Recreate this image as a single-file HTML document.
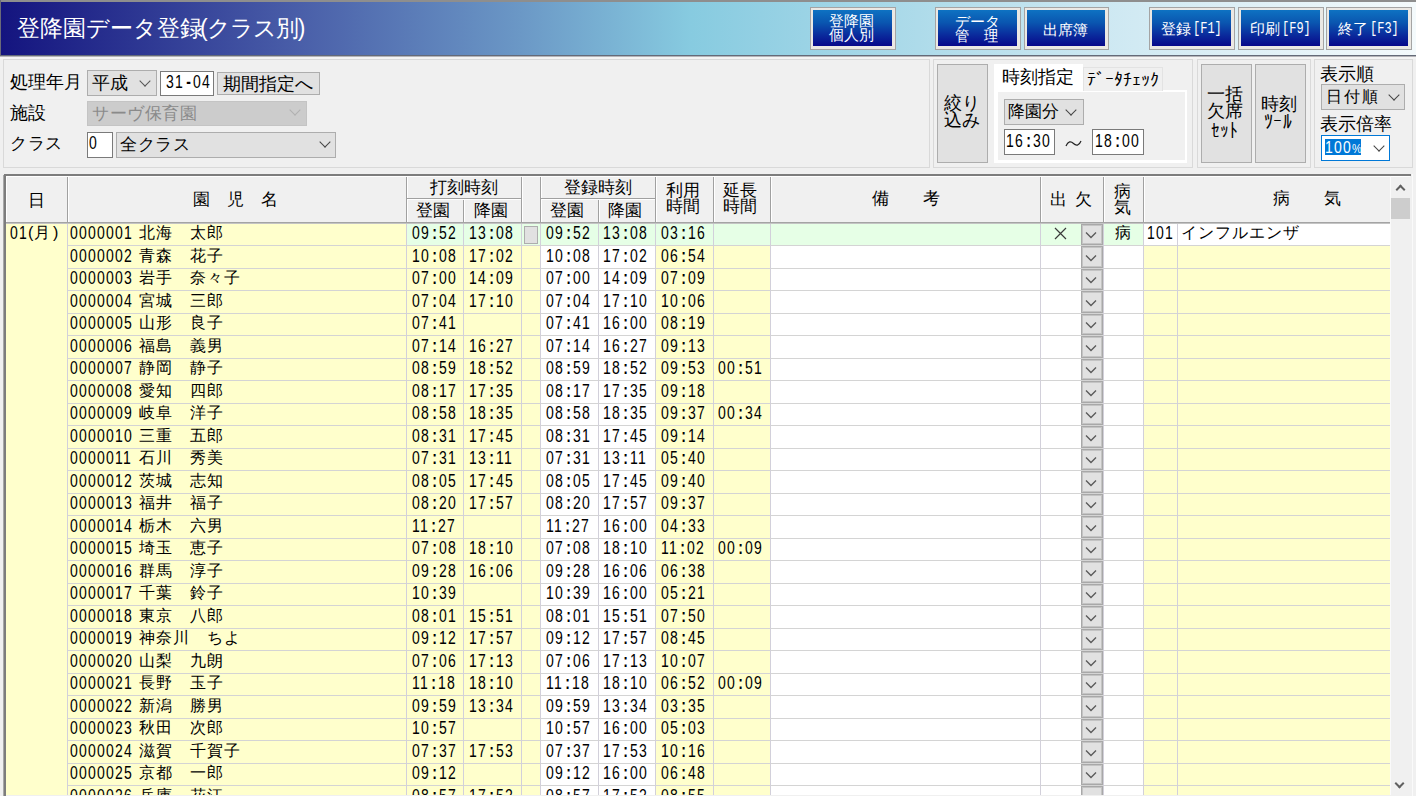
<!DOCTYPE html><html><head><meta charset="utf-8"><title>登降園データ登録</title><style>
*{box-sizing:border-box}
body{margin:0;width:1416px;height:796px;overflow:hidden;background:#f0f0f0;position:relative;font-family:"Liberation Sans",sans-serif;color:#000}
.a{position:absolute}
.t{position:absolute;white-space:pre;line-height:1}
.m{font-family:"Liberation Mono",monospace}
.n{font-family:"Liberation Sans",sans-serif;letter-spacing:1.22px}
.c{display:inline-block;width:9px;text-align:center;letter-spacing:0;font-weight:bold}
.btn{position:absolute;background:#ebe8e4;border:1px solid #a4a4a4}
.btn i{position:absolute;left:2px;top:2px;right:3px;bottom:3px;background:linear-gradient(#0e72c2,#0a56b0 35%,#0a2a9c 70%,#08088a);display:block}
.btn b{position:absolute;color:#fff;font-weight:normal;white-space:pre;line-height:1}
.grp{position:absolute;border:1px solid #d9d9d9}
.cb{position:absolute;background:#e1e1e1;border:1px solid #adadad}
.inp{position:absolute;background:#fff;border:1px solid #7a7a7a}
.chev{position:absolute;width:8px;height:8px;border-right:1.3px solid #444;border-bottom:1.3px solid #444;transform:rotate(45deg)}
.vb{position:absolute;background:#e1e1e1;border:1px solid #adadad}
</style></head><body>
<div class="a" style="left:0;top:0;width:1416px;height:2px;background:#8e8e8e"></div>
<div class="a" style="left:0;top:0;width:1px;height:56px;background:#6a6a78"></div>
<div class="a" style="left:1px;top:2px;width:1415px;height:53px;background:linear-gradient(90deg,#14147f 0px,#4a5fa9 300px,#6b98c6 520px,#87cbe0 690px,#cde8f2 1100px,#f4fafc 1416px)"></div>
<div class="t" style="left:17px;top:17px;font-size:23px;color:#fff">登降園データ登録</div>
<div class="t" style="left:200px;top:17px;font-size:23px;color:#fff;letter-spacing:-1px">(クラス別)</div>
<div class="btn" style="left:810px;top:7px;width:86px;height:43px"><i></i><b style="left:18px;top:5px;font-size:15px;">登降園</b><b style="left:18px;top:19px;font-size:15px;">個人別</b></div>
<div class="btn" style="left:935px;top:7px;width:86px;height:43px"><i></i><b style="left:19px;top:6px;font-size:15px;">データ</b><b style="left:19px;top:20px;font-size:15px;transform:scaleX(0.95);transform-origin:0 0">管　理</b></div>
<div class="btn" style="left:1024px;top:7px;width:85px;height:43px"><i></i><b style="left:18px;top:14px;font-size:15px;">出席簿</b></div>
<div class="btn" style="left:1149px;top:7px;width:86px;height:43px"><i></i><b style="left:11px;top:13px;font-size:15px;">登録</b><b style="left:43px;top:13px;font-size:12px;font-family:Liberation Mono;transform:scaleY(1.3);transform-origin:0 0">[F1]</b></div>
<div class="btn" style="left:1238px;top:7px;width:86px;height:43px"><i></i><b style="left:11px;top:13px;font-size:15px;">印刷</b><b style="left:43px;top:13px;font-size:12px;font-family:Liberation Mono;transform:scaleY(1.3);transform-origin:0 0">[F9]</b></div>
<div class="btn" style="left:1326px;top:7px;width:86px;height:43px"><i></i><b style="left:11px;top:13px;font-size:15px;">終了</b><b style="left:43px;top:13px;font-size:12px;font-family:Liberation Mono;transform:scaleY(1.3);transform-origin:0 0">[F3]</b></div>
<div class="a" style="left:0;top:55px;width:1416px;height:1px;background:#646a78"></div>
<div class="a" style="left:0;top:56px;width:1416px;height:1px;background:#b4b4b8"></div>
<div class="a" style="left:0;top:57px;width:1416px;height:2px;background:#f4f4f4"></div>
<div class="grp" style="left:3px;top:59px;width:927px;height:109px"></div>
<div class="grp" style="left:933px;top:59px;width:260px;height:109px"></div>
<div class="grp" style="left:1197px;top:59px;width:114px;height:109px"></div>
<div class="grp" style="left:1314px;top:59px;width:99px;height:109px"></div>
<div class="t" style="left:10px;top:73px;font-size:18px">処理年月</div>
<div class="cb" style="left:87px;top:70px;width:70px;height:26px"></div>
<div class="t" style="left:92px;top:74px;font-size:18px">平成</div>
<div class="chev" style="left:141px;top:77px;border-color:#555"></div>
<div class="inp" style="left:160px;top:71px;width:54px;height:25px"></div>
<div class="t n" style="left:166px;top:73px;font-size:14px;transform:scaleY(1.25);transform-origin:0 0">31<span class="c">-</span>04</div>
<div class="cb" style="left:217px;top:72px;width:103px;height:23px"></div>
<div class="t" style="left:223px;top:75px;font-size:18px">期間指定へ</div>
<div class="t" style="left:10px;top:104px;font-size:18px">施設</div>
<div class="a" style="left:87px;top:101px;width:220px;height:25px;background:#cccccc;border:1px solid #c4c4c4"></div>
<div class="t" style="left:92px;top:105px;font-size:17px;color:#8a8a8a;letter-spacing:0.5px">サーヴ保育園</div>
<div class="chev" style="left:291px;top:106px;border-color:#b0b0b0"></div>
<div class="t" style="left:10px;top:135px;font-size:17px;letter-spacing:0.5px">クラス</div>
<div class="inp" style="left:87px;top:132px;width:26px;height:26px"></div>
<div class="t n" style="left:89px;top:133px;font-size:14px;transform:scaleY(1.3);transform-origin:0 0">0</div>
<div class="cb" style="left:116px;top:132px;width:220px;height:26px"></div>
<div class="t" style="left:120px;top:136px;font-size:17px;letter-spacing:0.5px">全クラス</div>
<div class="chev" style="left:321px;top:138px"></div>
<div class="vb" style="left:937px;top:64px;width:51px;height:99px"></div>
<div class="t" style="left:944px;top:95px;font-size:18px;line-height:17px">絞り<br>込み</div>
<div class="a" style="left:994px;top:90px;width:193px;height:73px;background:#fff"></div>
<div class="a" style="left:998px;top:92px;width:187px;height:68px;background:#f0f0f0"></div>
<div class="a" style="left:994px;top:64px;width:89px;height:28px;background:#fff"></div>
<div class="a" style="left:1083px;top:67px;width:80px;height:24px;background:#f0f0f0;border:1px solid #e3e3e3;border-bottom:none"></div>
<div class="t" style="left:1002px;top:69px;font-size:17.5px">時刻指定</div>
<div class="t" style="left:1087px;top:71px;font-size:18px">ﾃﾞｰﾀﾁｪｯｸ</div>
<div class="cb" style="left:1004px;top:99px;width:80px;height:26px"></div>
<div class="t" style="left:1008px;top:103px;font-size:17px">降園分</div>
<div class="chev" style="left:1067px;top:106px"></div>
<div class="inp" style="left:1004px;top:129px;width:51px;height:26px"></div>
<div class="t n" style="left:1006px;top:131px;font-size:14px;transform:scaleY(1.3);transform-origin:0 0">16<span class="c">:</span>30</div>
<svg class="a" style="left:1065px;top:138px" width="17" height="10"><path d="M1 8C3 3 6 3 8.5 5.5S14 8 16 3" stroke="#222" stroke-width="1.2" fill="none"/></svg>
<div class="inp" style="left:1092px;top:129px;width:52px;height:26px"></div>
<div class="t n" style="left:1095px;top:131px;font-size:14px;transform:scaleY(1.3);transform-origin:0 0">18<span class="c">:</span>00</div>
<div class="vb" style="left:1201px;top:64px;width:51px;height:99px"></div>
<div class="t" style="left:1207px;top:86px;font-size:18px;line-height:17px">一括<br>欠席</div>
<div class="t" style="left:1211px;top:121px;font-size:19px;transform:scaleX(0.9);transform-origin:0 0">ｾｯﾄ</div>
<div class="vb" style="left:1255px;top:64px;width:51px;height:99px"></div>
<div class="t" style="left:1261px;top:95px;font-size:18px">時刻</div>
<div class="t" style="left:1264px;top:111px;font-size:21px;transform:scaleX(0.85);transform-origin:0 0">ﾂｰﾙ</div>
<div class="t" style="left:1320px;top:65px;font-size:18px">表示順</div>
<div class="cb" style="left:1321px;top:84px;width:84px;height:26px"></div>
<div class="t" style="left:1326px;top:89px;font-size:16px;letter-spacing:2px">日付順</div>
<div class="chev" style="left:1390px;top:91px"></div>
<div class="t" style="left:1320px;top:115px;font-size:18px">表示倍率</div>
<div class="a" style="left:1321px;top:135px;width:69px;height:26px;background:#fff;border:1px solid #0078d7"></div>
<div class="a" style="left:1325px;top:139px;width:36px;height:16px;background:#0078d7"></div>
<div class="t n" style="left:1325px;top:139px;font-size:14px;color:#fff;transform:scaleY(1.2);transform-origin:0 0">100<span class="c" style="font-size:11px;font-weight:normal">%</span></div>
<div class="chev" style="left:1375px;top:142px"></div>
<div class="a" style="left:4px;top:174px;width:1409px;height:622px;background:#f0f0f0;border-left:2px solid #7d7d7d;border-top:2px solid #7d7d7d"></div>
<div class="a" style="left:3px;top:175px;width:1px;height:621px;background:#a8a8a8"></div>
<div class="a" style="left:6px;top:176px;width:1404px;height:1px;background:#fff"></div>
<div class="a" style="left:6px;top:176px;width:1px;height:620px;background:#fff"></div>
<div class="a" style="left:67px;top:177px;width:1px;height:45px;background:#a0a0a0"></div>
<div class="a" style="left:68px;top:177px;width:1px;height:45px;background:#fff"></div>
<div class="a" style="left:406px;top:177px;width:1px;height:45px;background:#a0a0a0"></div>
<div class="a" style="left:407px;top:177px;width:1px;height:45px;background:#fff"></div>
<div class="a" style="left:463px;top:199px;width:1px;height:23px;background:#a0a0a0"></div>
<div class="a" style="left:464px;top:199px;width:1px;height:23px;background:#fff"></div>
<div class="a" style="left:521px;top:177px;width:1px;height:45px;background:#a0a0a0"></div>
<div class="a" style="left:522px;top:177px;width:1px;height:45px;background:#fff"></div>
<div class="a" style="left:540px;top:177px;width:1px;height:45px;background:#a0a0a0"></div>
<div class="a" style="left:541px;top:177px;width:1px;height:45px;background:#fff"></div>
<div class="a" style="left:598px;top:199px;width:1px;height:23px;background:#a0a0a0"></div>
<div class="a" style="left:599px;top:199px;width:1px;height:23px;background:#fff"></div>
<div class="a" style="left:655px;top:177px;width:1px;height:45px;background:#a0a0a0"></div>
<div class="a" style="left:656px;top:177px;width:1px;height:45px;background:#fff"></div>
<div class="a" style="left:713px;top:177px;width:1px;height:45px;background:#a0a0a0"></div>
<div class="a" style="left:714px;top:177px;width:1px;height:45px;background:#fff"></div>
<div class="a" style="left:770px;top:177px;width:1px;height:45px;background:#a0a0a0"></div>
<div class="a" style="left:771px;top:177px;width:1px;height:45px;background:#fff"></div>
<div class="a" style="left:1040px;top:177px;width:1px;height:45px;background:#a0a0a0"></div>
<div class="a" style="left:1041px;top:177px;width:1px;height:45px;background:#fff"></div>
<div class="a" style="left:1103px;top:177px;width:1px;height:45px;background:#a0a0a0"></div>
<div class="a" style="left:1104px;top:177px;width:1px;height:45px;background:#fff"></div>
<div class="a" style="left:1143px;top:177px;width:1px;height:45px;background:#a0a0a0"></div>
<div class="a" style="left:1144px;top:177px;width:1px;height:45px;background:#fff"></div>
<div class="a" style="left:1390px;top:177px;width:1px;height:45px;background:#a0a0a0"></div>
<div class="a" style="left:1391px;top:177px;width:1px;height:45px;background:#fff"></div>
<div class="a" style="left:406px;top:198px;width:115px;height:1px;background:#a0a0a0"></div>
<div class="a" style="left:540px;top:198px;width:115px;height:1px;background:#a0a0a0"></div>
<div class="a" style="left:407px;top:199px;width:114px;height:1px;background:#fff"></div>
<div class="a" style="left:541px;top:199px;width:114px;height:1px;background:#fff"></div>
<div class="t" style="left:28px;top:192px;font-size:17px;">日</div>
<div class="t" style="left:193px;top:191px;font-size:17px;">園　児　名</div>
<div class="t" style="left:430px;top:179px;font-size:17px;">打刻時刻</div>
<div class="t" style="left:416px;top:202px;font-size:17px;">登園</div>
<div class="t" style="left:474px;top:202px;font-size:17px;">降園</div>
<div class="t" style="left:564px;top:179px;font-size:17px;">登録時刻</div>
<div class="t" style="left:550px;top:202px;font-size:17px;">登園</div>
<div class="t" style="left:608px;top:202px;font-size:17px;">降園</div>
<div class="t" style="left:666px;top:183px;font-size:17px;line-height:16px">利用<br>時間</div>
<div class="t" style="left:723px;top:183px;font-size:17px;line-height:16px">延長<br>時間</div>
<div class="t" style="left:872px;top:190px;font-size:17px;">備　　考</div>
<div class="t" style="left:1050px;top:191px;font-size:17px;">出</div>
<div class="t" style="left:1075px;top:191px;font-size:17px;">欠</div>
<div class="t" style="left:1114px;top:184px;font-size:17px;line-height:16px">病<br>気</div>
<div class="t" style="left:1273px;top:190px;font-size:17px;">病　　気</div>
<div class="a" style="left:1390px;top:177px;width:21px;height:619px;background:#f0f0f0"></div>
<div class="a" style="left:1391px;top:198px;width:19px;height:21px;background:#cdcdcd"></div>
<div class="a" style="left:1390px;top:176px;width:1px;height:620px;background:#fafafa"></div>
<div class="a" style="left:1397px;top:186px;width:7px;height:7px;border-left:2px solid #606060;border-top:2px solid #606060;transform:rotate(45deg)"></div>
<div class="a" style="left:1396px;top:780px;width:7px;height:7px;border-right:2px solid #606060;border-bottom:2px solid #606060;transform:rotate(45deg)"></div>
<div class="a" style="left:1411px;top:174px;width:5px;height:622px;background:#f0f0f0"></div>
<div class="a" style="left:1412px;top:174px;width:1px;height:622px;background:#fafafa"></div>
<div class="a" style="left:6px;top:222px;width:1384px;height:1px;background:#a4a4a4"></div>
<div class="a" style="left:6px;top:223px;width:1384px;height:1px;background:#c4c4c4"></div>
<div class="a" style="left:6px;top:224px;width:61px;height:572px;background:#ffffcc"></div>
<div class="a" style="left:68px;top:224px;width:338px;height:21px;background:#ffffcc"></div>
<div class="a" style="left:407px;top:224px;width:736px;height:21px;background:#e6ffe6"></div>
<div class="a" style="left:1144px;top:224px;width:246px;height:21px;background:#ffffff"></div>
<div class="a" style="left:67px;top:245px;width:1323px;height:1px;background:#d4d4d4"></div>
<div class="t n" style="left:70px;top:223px;font-size:14px;transform:scaleY(1.32);transform-origin:0 0">0000001</div>
<div class="t" style="left:139px;top:225px;font-size:16px;letter-spacing:1px">北海　太郎</div>
<div class="t n" style="left:412px;top:223px;font-size:14px;transform:scaleY(1.32);transform-origin:0 0">09<span class="c">:</span>52</div>
<div class="t n" style="left:469px;top:223px;font-size:14px;transform:scaleY(1.32);transform-origin:0 0">13<span class="c">:</span>08</div>
<div class="t n" style="left:546px;top:223px;font-size:14px;transform:scaleY(1.32);transform-origin:0 0">09<span class="c">:</span>52</div>
<div class="t n" style="left:603px;top:223px;font-size:14px;transform:scaleY(1.32);transform-origin:0 0">13<span class="c">:</span>08</div>
<div class="t n" style="left:661px;top:223px;font-size:14px;transform:scaleY(1.32);transform-origin:0 0">03<span class="c">:</span>16</div>
<div class="vb" style="left:1081px;top:224px;width:22px;height:21px;border-color:#a8a8a8;box-shadow:inset 0 0 0 1px #c4c4c4"></div>
<svg class="a" style="left:1085px;top:231px" width="12" height="8"><path d="M1 1.5L6 6.5L11 1.5" stroke="#5a5a5a" stroke-width="1.35" fill="none"/></svg>
<div class="vb" style="left:524px;top:226px;width:14px;height:18px"></div>
<svg class="a" style="left:1054px;top:227px" width="13" height="13"><path d="M1 1L12 12M12 1L1 12" stroke="#3a3a3a" stroke-width="1.2" fill="none"/></svg>
<div class="t" style="left:1115px;top:225px;font-size:16px">病</div>
<div class="t n" style="left:1147px;top:224px;font-size:14px;transform:scaleY(1.25);transform-origin:0 0">101</div>
<div class="t" style="left:1181px;top:225px;font-size:16px;letter-spacing:1px">インフルエンザ</div>
<div class="t n" style="left:10px;top:223px;font-size:14px;transform:scaleY(1.32);transform-origin:0 0">01</div>
<div class="t" style="left:28px;top:225px;font-size:16px">(</div>
<div class="t" style="left:34px;top:225px;font-size:16px">月</div>
<div class="t" style="left:53px;top:225px;font-size:16px">)</div>
<div class="a" style="left:68px;top:246px;width:472px;height:22px;background:#ffffcc"></div>
<div class="a" style="left:541px;top:246px;width:114px;height:22px;background:#ffffff"></div>
<div class="a" style="left:656px;top:246px;width:114px;height:22px;background:#ffffcc"></div>
<div class="a" style="left:771px;top:246px;width:372px;height:22px;background:#ffffff"></div>
<div class="a" style="left:1144px;top:246px;width:246px;height:22px;background:#ffffcc"></div>
<div class="a" style="left:67px;top:268px;width:1323px;height:1px;background:#d4d4d4"></div>
<div class="t n" style="left:70px;top:246px;font-size:14px;transform:scaleY(1.32);transform-origin:0 0">0000002</div>
<div class="t" style="left:139px;top:248px;font-size:16px;letter-spacing:1px">青森　花子</div>
<div class="t n" style="left:412px;top:246px;font-size:14px;transform:scaleY(1.32);transform-origin:0 0">10<span class="c">:</span>08</div>
<div class="t n" style="left:469px;top:246px;font-size:14px;transform:scaleY(1.32);transform-origin:0 0">17<span class="c">:</span>02</div>
<div class="t n" style="left:546px;top:246px;font-size:14px;transform:scaleY(1.32);transform-origin:0 0">10<span class="c">:</span>08</div>
<div class="t n" style="left:603px;top:246px;font-size:14px;transform:scaleY(1.32);transform-origin:0 0">17<span class="c">:</span>02</div>
<div class="t n" style="left:661px;top:246px;font-size:14px;transform:scaleY(1.32);transform-origin:0 0">06<span class="c">:</span>54</div>
<div class="vb" style="left:1081px;top:246px;width:22px;height:22px;border-color:#a8a8a8;box-shadow:inset 0 0 0 1px #c4c4c4"></div>
<svg class="a" style="left:1085px;top:254px" width="12" height="8"><path d="M1 1.5L6 6.5L11 1.5" stroke="#5a5a5a" stroke-width="1.35" fill="none"/></svg>
<div class="a" style="left:68px;top:269px;width:472px;height:21px;background:#ffffcc"></div>
<div class="a" style="left:541px;top:269px;width:114px;height:21px;background:#ffffff"></div>
<div class="a" style="left:656px;top:269px;width:114px;height:21px;background:#ffffcc"></div>
<div class="a" style="left:771px;top:269px;width:372px;height:21px;background:#ffffff"></div>
<div class="a" style="left:1144px;top:269px;width:246px;height:21px;background:#ffffcc"></div>
<div class="a" style="left:67px;top:290px;width:1323px;height:1px;background:#d4d4d4"></div>
<div class="t n" style="left:70px;top:268px;font-size:14px;transform:scaleY(1.32);transform-origin:0 0">0000003</div>
<div class="t" style="left:139px;top:270px;font-size:16px;letter-spacing:1px">岩手　奈々子</div>
<div class="t n" style="left:412px;top:268px;font-size:14px;transform:scaleY(1.32);transform-origin:0 0">07<span class="c">:</span>00</div>
<div class="t n" style="left:469px;top:268px;font-size:14px;transform:scaleY(1.32);transform-origin:0 0">14<span class="c">:</span>09</div>
<div class="t n" style="left:546px;top:268px;font-size:14px;transform:scaleY(1.32);transform-origin:0 0">07<span class="c">:</span>00</div>
<div class="t n" style="left:603px;top:268px;font-size:14px;transform:scaleY(1.32);transform-origin:0 0">14<span class="c">:</span>09</div>
<div class="t n" style="left:661px;top:268px;font-size:14px;transform:scaleY(1.32);transform-origin:0 0">07<span class="c">:</span>09</div>
<div class="vb" style="left:1081px;top:269px;width:22px;height:21px;border-color:#a8a8a8;box-shadow:inset 0 0 0 1px #c4c4c4"></div>
<svg class="a" style="left:1085px;top:276px" width="12" height="8"><path d="M1 1.5L6 6.5L11 1.5" stroke="#5a5a5a" stroke-width="1.35" fill="none"/></svg>
<div class="a" style="left:68px;top:291px;width:472px;height:22px;background:#ffffcc"></div>
<div class="a" style="left:541px;top:291px;width:114px;height:22px;background:#ffffff"></div>
<div class="a" style="left:656px;top:291px;width:114px;height:22px;background:#ffffcc"></div>
<div class="a" style="left:771px;top:291px;width:372px;height:22px;background:#ffffff"></div>
<div class="a" style="left:1144px;top:291px;width:246px;height:22px;background:#ffffcc"></div>
<div class="a" style="left:67px;top:313px;width:1323px;height:1px;background:#d4d4d4"></div>
<div class="t n" style="left:70px;top:291px;font-size:14px;transform:scaleY(1.32);transform-origin:0 0">0000004</div>
<div class="t" style="left:139px;top:293px;font-size:16px;letter-spacing:1px">宮城　三郎</div>
<div class="t n" style="left:412px;top:291px;font-size:14px;transform:scaleY(1.32);transform-origin:0 0">07<span class="c">:</span>04</div>
<div class="t n" style="left:469px;top:291px;font-size:14px;transform:scaleY(1.32);transform-origin:0 0">17<span class="c">:</span>10</div>
<div class="t n" style="left:546px;top:291px;font-size:14px;transform:scaleY(1.32);transform-origin:0 0">07<span class="c">:</span>04</div>
<div class="t n" style="left:603px;top:291px;font-size:14px;transform:scaleY(1.32);transform-origin:0 0">17<span class="c">:</span>10</div>
<div class="t n" style="left:661px;top:291px;font-size:14px;transform:scaleY(1.32);transform-origin:0 0">10<span class="c">:</span>06</div>
<div class="vb" style="left:1081px;top:291px;width:22px;height:22px;border-color:#a8a8a8;box-shadow:inset 0 0 0 1px #c4c4c4"></div>
<svg class="a" style="left:1085px;top:299px" width="12" height="8"><path d="M1 1.5L6 6.5L11 1.5" stroke="#5a5a5a" stroke-width="1.35" fill="none"/></svg>
<div class="a" style="left:68px;top:314px;width:472px;height:21px;background:#ffffcc"></div>
<div class="a" style="left:541px;top:314px;width:114px;height:21px;background:#ffffff"></div>
<div class="a" style="left:656px;top:314px;width:114px;height:21px;background:#ffffcc"></div>
<div class="a" style="left:771px;top:314px;width:372px;height:21px;background:#ffffff"></div>
<div class="a" style="left:1144px;top:314px;width:246px;height:21px;background:#ffffcc"></div>
<div class="a" style="left:67px;top:335px;width:1323px;height:1px;background:#d4d4d4"></div>
<div class="t n" style="left:70px;top:313px;font-size:14px;transform:scaleY(1.32);transform-origin:0 0">0000005</div>
<div class="t" style="left:139px;top:315px;font-size:16px;letter-spacing:1px">山形　良子</div>
<div class="t n" style="left:412px;top:313px;font-size:14px;transform:scaleY(1.32);transform-origin:0 0">07<span class="c">:</span>41</div>
<div class="t n" style="left:546px;top:313px;font-size:14px;transform:scaleY(1.32);transform-origin:0 0">07<span class="c">:</span>41</div>
<div class="t n" style="left:603px;top:313px;font-size:14px;transform:scaleY(1.32);transform-origin:0 0">16<span class="c">:</span>00</div>
<div class="t n" style="left:661px;top:313px;font-size:14px;transform:scaleY(1.32);transform-origin:0 0">08<span class="c">:</span>19</div>
<div class="vb" style="left:1081px;top:314px;width:22px;height:21px;border-color:#a8a8a8;box-shadow:inset 0 0 0 1px #c4c4c4"></div>
<svg class="a" style="left:1085px;top:321px" width="12" height="8"><path d="M1 1.5L6 6.5L11 1.5" stroke="#5a5a5a" stroke-width="1.35" fill="none"/></svg>
<div class="a" style="left:68px;top:336px;width:472px;height:22px;background:#ffffcc"></div>
<div class="a" style="left:541px;top:336px;width:114px;height:22px;background:#ffffff"></div>
<div class="a" style="left:656px;top:336px;width:114px;height:22px;background:#ffffcc"></div>
<div class="a" style="left:771px;top:336px;width:372px;height:22px;background:#ffffff"></div>
<div class="a" style="left:1144px;top:336px;width:246px;height:22px;background:#ffffcc"></div>
<div class="a" style="left:67px;top:358px;width:1323px;height:1px;background:#d4d4d4"></div>
<div class="t n" style="left:70px;top:336px;font-size:14px;transform:scaleY(1.32);transform-origin:0 0">0000006</div>
<div class="t" style="left:139px;top:338px;font-size:16px;letter-spacing:1px">福島　義男</div>
<div class="t n" style="left:412px;top:336px;font-size:14px;transform:scaleY(1.32);transform-origin:0 0">07<span class="c">:</span>14</div>
<div class="t n" style="left:469px;top:336px;font-size:14px;transform:scaleY(1.32);transform-origin:0 0">16<span class="c">:</span>27</div>
<div class="t n" style="left:546px;top:336px;font-size:14px;transform:scaleY(1.32);transform-origin:0 0">07<span class="c">:</span>14</div>
<div class="t n" style="left:603px;top:336px;font-size:14px;transform:scaleY(1.32);transform-origin:0 0">16<span class="c">:</span>27</div>
<div class="t n" style="left:661px;top:336px;font-size:14px;transform:scaleY(1.32);transform-origin:0 0">09<span class="c">:</span>13</div>
<div class="vb" style="left:1081px;top:336px;width:22px;height:22px;border-color:#a8a8a8;box-shadow:inset 0 0 0 1px #c4c4c4"></div>
<svg class="a" style="left:1085px;top:344px" width="12" height="8"><path d="M1 1.5L6 6.5L11 1.5" stroke="#5a5a5a" stroke-width="1.35" fill="none"/></svg>
<div class="a" style="left:68px;top:359px;width:472px;height:21px;background:#ffffcc"></div>
<div class="a" style="left:541px;top:359px;width:114px;height:21px;background:#ffffff"></div>
<div class="a" style="left:656px;top:359px;width:114px;height:21px;background:#ffffcc"></div>
<div class="a" style="left:771px;top:359px;width:372px;height:21px;background:#ffffff"></div>
<div class="a" style="left:1144px;top:359px;width:246px;height:21px;background:#ffffcc"></div>
<div class="a" style="left:67px;top:380px;width:1323px;height:1px;background:#d4d4d4"></div>
<div class="t n" style="left:70px;top:358px;font-size:14px;transform:scaleY(1.32);transform-origin:0 0">0000007</div>
<div class="t" style="left:139px;top:360px;font-size:16px;letter-spacing:1px">静岡　静子</div>
<div class="t n" style="left:412px;top:358px;font-size:14px;transform:scaleY(1.32);transform-origin:0 0">08<span class="c">:</span>59</div>
<div class="t n" style="left:469px;top:358px;font-size:14px;transform:scaleY(1.32);transform-origin:0 0">18<span class="c">:</span>52</div>
<div class="t n" style="left:546px;top:358px;font-size:14px;transform:scaleY(1.32);transform-origin:0 0">08<span class="c">:</span>59</div>
<div class="t n" style="left:603px;top:358px;font-size:14px;transform:scaleY(1.32);transform-origin:0 0">18<span class="c">:</span>52</div>
<div class="t n" style="left:661px;top:358px;font-size:14px;transform:scaleY(1.32);transform-origin:0 0">09<span class="c">:</span>53</div>
<div class="t n" style="left:718px;top:358px;font-size:14px;transform:scaleY(1.32);transform-origin:0 0">00<span class="c">:</span>51</div>
<div class="vb" style="left:1081px;top:359px;width:22px;height:21px;border-color:#a8a8a8;box-shadow:inset 0 0 0 1px #c4c4c4"></div>
<svg class="a" style="left:1085px;top:366px" width="12" height="8"><path d="M1 1.5L6 6.5L11 1.5" stroke="#5a5a5a" stroke-width="1.35" fill="none"/></svg>
<div class="a" style="left:68px;top:381px;width:472px;height:22px;background:#ffffcc"></div>
<div class="a" style="left:541px;top:381px;width:114px;height:22px;background:#ffffff"></div>
<div class="a" style="left:656px;top:381px;width:114px;height:22px;background:#ffffcc"></div>
<div class="a" style="left:771px;top:381px;width:372px;height:22px;background:#ffffff"></div>
<div class="a" style="left:1144px;top:381px;width:246px;height:22px;background:#ffffcc"></div>
<div class="a" style="left:67px;top:403px;width:1323px;height:1px;background:#d4d4d4"></div>
<div class="t n" style="left:70px;top:381px;font-size:14px;transform:scaleY(1.32);transform-origin:0 0">0000008</div>
<div class="t" style="left:139px;top:383px;font-size:16px;letter-spacing:1px">愛知　四郎</div>
<div class="t n" style="left:412px;top:381px;font-size:14px;transform:scaleY(1.32);transform-origin:0 0">08<span class="c">:</span>17</div>
<div class="t n" style="left:469px;top:381px;font-size:14px;transform:scaleY(1.32);transform-origin:0 0">17<span class="c">:</span>35</div>
<div class="t n" style="left:546px;top:381px;font-size:14px;transform:scaleY(1.32);transform-origin:0 0">08<span class="c">:</span>17</div>
<div class="t n" style="left:603px;top:381px;font-size:14px;transform:scaleY(1.32);transform-origin:0 0">17<span class="c">:</span>35</div>
<div class="t n" style="left:661px;top:381px;font-size:14px;transform:scaleY(1.32);transform-origin:0 0">09<span class="c">:</span>18</div>
<div class="vb" style="left:1081px;top:381px;width:22px;height:22px;border-color:#a8a8a8;box-shadow:inset 0 0 0 1px #c4c4c4"></div>
<svg class="a" style="left:1085px;top:389px" width="12" height="8"><path d="M1 1.5L6 6.5L11 1.5" stroke="#5a5a5a" stroke-width="1.35" fill="none"/></svg>
<div class="a" style="left:68px;top:404px;width:472px;height:21px;background:#ffffcc"></div>
<div class="a" style="left:541px;top:404px;width:114px;height:21px;background:#ffffff"></div>
<div class="a" style="left:656px;top:404px;width:114px;height:21px;background:#ffffcc"></div>
<div class="a" style="left:771px;top:404px;width:372px;height:21px;background:#ffffff"></div>
<div class="a" style="left:1144px;top:404px;width:246px;height:21px;background:#ffffcc"></div>
<div class="a" style="left:67px;top:425px;width:1323px;height:1px;background:#d4d4d4"></div>
<div class="t n" style="left:70px;top:403px;font-size:14px;transform:scaleY(1.32);transform-origin:0 0">0000009</div>
<div class="t" style="left:139px;top:405px;font-size:16px;letter-spacing:1px">岐阜　洋子</div>
<div class="t n" style="left:412px;top:403px;font-size:14px;transform:scaleY(1.32);transform-origin:0 0">08<span class="c">:</span>58</div>
<div class="t n" style="left:469px;top:403px;font-size:14px;transform:scaleY(1.32);transform-origin:0 0">18<span class="c">:</span>35</div>
<div class="t n" style="left:546px;top:403px;font-size:14px;transform:scaleY(1.32);transform-origin:0 0">08<span class="c">:</span>58</div>
<div class="t n" style="left:603px;top:403px;font-size:14px;transform:scaleY(1.32);transform-origin:0 0">18<span class="c">:</span>35</div>
<div class="t n" style="left:661px;top:403px;font-size:14px;transform:scaleY(1.32);transform-origin:0 0">09<span class="c">:</span>37</div>
<div class="t n" style="left:718px;top:403px;font-size:14px;transform:scaleY(1.32);transform-origin:0 0">00<span class="c">:</span>34</div>
<div class="vb" style="left:1081px;top:404px;width:22px;height:21px;border-color:#a8a8a8;box-shadow:inset 0 0 0 1px #c4c4c4"></div>
<svg class="a" style="left:1085px;top:411px" width="12" height="8"><path d="M1 1.5L6 6.5L11 1.5" stroke="#5a5a5a" stroke-width="1.35" fill="none"/></svg>
<div class="a" style="left:68px;top:426px;width:472px;height:22px;background:#ffffcc"></div>
<div class="a" style="left:541px;top:426px;width:114px;height:22px;background:#ffffff"></div>
<div class="a" style="left:656px;top:426px;width:114px;height:22px;background:#ffffcc"></div>
<div class="a" style="left:771px;top:426px;width:372px;height:22px;background:#ffffff"></div>
<div class="a" style="left:1144px;top:426px;width:246px;height:22px;background:#ffffcc"></div>
<div class="a" style="left:67px;top:448px;width:1323px;height:1px;background:#d4d4d4"></div>
<div class="t n" style="left:70px;top:426px;font-size:14px;transform:scaleY(1.32);transform-origin:0 0">0000010</div>
<div class="t" style="left:139px;top:428px;font-size:16px;letter-spacing:1px">三重　五郎</div>
<div class="t n" style="left:412px;top:426px;font-size:14px;transform:scaleY(1.32);transform-origin:0 0">08<span class="c">:</span>31</div>
<div class="t n" style="left:469px;top:426px;font-size:14px;transform:scaleY(1.32);transform-origin:0 0">17<span class="c">:</span>45</div>
<div class="t n" style="left:546px;top:426px;font-size:14px;transform:scaleY(1.32);transform-origin:0 0">08<span class="c">:</span>31</div>
<div class="t n" style="left:603px;top:426px;font-size:14px;transform:scaleY(1.32);transform-origin:0 0">17<span class="c">:</span>45</div>
<div class="t n" style="left:661px;top:426px;font-size:14px;transform:scaleY(1.32);transform-origin:0 0">09<span class="c">:</span>14</div>
<div class="vb" style="left:1081px;top:426px;width:22px;height:22px;border-color:#a8a8a8;box-shadow:inset 0 0 0 1px #c4c4c4"></div>
<svg class="a" style="left:1085px;top:434px" width="12" height="8"><path d="M1 1.5L6 6.5L11 1.5" stroke="#5a5a5a" stroke-width="1.35" fill="none"/></svg>
<div class="a" style="left:68px;top:449px;width:472px;height:21px;background:#ffffcc"></div>
<div class="a" style="left:541px;top:449px;width:114px;height:21px;background:#ffffff"></div>
<div class="a" style="left:656px;top:449px;width:114px;height:21px;background:#ffffcc"></div>
<div class="a" style="left:771px;top:449px;width:372px;height:21px;background:#ffffff"></div>
<div class="a" style="left:1144px;top:449px;width:246px;height:21px;background:#ffffcc"></div>
<div class="a" style="left:67px;top:470px;width:1323px;height:1px;background:#d4d4d4"></div>
<div class="t n" style="left:70px;top:448px;font-size:14px;transform:scaleY(1.32);transform-origin:0 0">0000011</div>
<div class="t" style="left:139px;top:450px;font-size:16px;letter-spacing:1px">石川　秀美</div>
<div class="t n" style="left:412px;top:448px;font-size:14px;transform:scaleY(1.32);transform-origin:0 0">07<span class="c">:</span>31</div>
<div class="t n" style="left:469px;top:448px;font-size:14px;transform:scaleY(1.32);transform-origin:0 0">13<span class="c">:</span>11</div>
<div class="t n" style="left:546px;top:448px;font-size:14px;transform:scaleY(1.32);transform-origin:0 0">07<span class="c">:</span>31</div>
<div class="t n" style="left:603px;top:448px;font-size:14px;transform:scaleY(1.32);transform-origin:0 0">13<span class="c">:</span>11</div>
<div class="t n" style="left:661px;top:448px;font-size:14px;transform:scaleY(1.32);transform-origin:0 0">05<span class="c">:</span>40</div>
<div class="vb" style="left:1081px;top:449px;width:22px;height:21px;border-color:#a8a8a8;box-shadow:inset 0 0 0 1px #c4c4c4"></div>
<svg class="a" style="left:1085px;top:456px" width="12" height="8"><path d="M1 1.5L6 6.5L11 1.5" stroke="#5a5a5a" stroke-width="1.35" fill="none"/></svg>
<div class="a" style="left:68px;top:471px;width:472px;height:22px;background:#ffffcc"></div>
<div class="a" style="left:541px;top:471px;width:114px;height:22px;background:#ffffff"></div>
<div class="a" style="left:656px;top:471px;width:114px;height:22px;background:#ffffcc"></div>
<div class="a" style="left:771px;top:471px;width:372px;height:22px;background:#ffffff"></div>
<div class="a" style="left:1144px;top:471px;width:246px;height:22px;background:#ffffcc"></div>
<div class="a" style="left:67px;top:493px;width:1323px;height:1px;background:#d4d4d4"></div>
<div class="t n" style="left:70px;top:471px;font-size:14px;transform:scaleY(1.32);transform-origin:0 0">0000012</div>
<div class="t" style="left:139px;top:473px;font-size:16px;letter-spacing:1px">茨城　志知</div>
<div class="t n" style="left:412px;top:471px;font-size:14px;transform:scaleY(1.32);transform-origin:0 0">08<span class="c">:</span>05</div>
<div class="t n" style="left:469px;top:471px;font-size:14px;transform:scaleY(1.32);transform-origin:0 0">17<span class="c">:</span>45</div>
<div class="t n" style="left:546px;top:471px;font-size:14px;transform:scaleY(1.32);transform-origin:0 0">08<span class="c">:</span>05</div>
<div class="t n" style="left:603px;top:471px;font-size:14px;transform:scaleY(1.32);transform-origin:0 0">17<span class="c">:</span>45</div>
<div class="t n" style="left:661px;top:471px;font-size:14px;transform:scaleY(1.32);transform-origin:0 0">09<span class="c">:</span>40</div>
<div class="vb" style="left:1081px;top:471px;width:22px;height:22px;border-color:#a8a8a8;box-shadow:inset 0 0 0 1px #c4c4c4"></div>
<svg class="a" style="left:1085px;top:479px" width="12" height="8"><path d="M1 1.5L6 6.5L11 1.5" stroke="#5a5a5a" stroke-width="1.35" fill="none"/></svg>
<div class="a" style="left:68px;top:494px;width:472px;height:21px;background:#ffffcc"></div>
<div class="a" style="left:541px;top:494px;width:114px;height:21px;background:#ffffff"></div>
<div class="a" style="left:656px;top:494px;width:114px;height:21px;background:#ffffcc"></div>
<div class="a" style="left:771px;top:494px;width:372px;height:21px;background:#ffffff"></div>
<div class="a" style="left:1144px;top:494px;width:246px;height:21px;background:#ffffcc"></div>
<div class="a" style="left:67px;top:515px;width:1323px;height:1px;background:#d4d4d4"></div>
<div class="t n" style="left:70px;top:493px;font-size:14px;transform:scaleY(1.32);transform-origin:0 0">0000013</div>
<div class="t" style="left:139px;top:495px;font-size:16px;letter-spacing:1px">福井　福子</div>
<div class="t n" style="left:412px;top:493px;font-size:14px;transform:scaleY(1.32);transform-origin:0 0">08<span class="c">:</span>20</div>
<div class="t n" style="left:469px;top:493px;font-size:14px;transform:scaleY(1.32);transform-origin:0 0">17<span class="c">:</span>57</div>
<div class="t n" style="left:546px;top:493px;font-size:14px;transform:scaleY(1.32);transform-origin:0 0">08<span class="c">:</span>20</div>
<div class="t n" style="left:603px;top:493px;font-size:14px;transform:scaleY(1.32);transform-origin:0 0">17<span class="c">:</span>57</div>
<div class="t n" style="left:661px;top:493px;font-size:14px;transform:scaleY(1.32);transform-origin:0 0">09<span class="c">:</span>37</div>
<div class="vb" style="left:1081px;top:494px;width:22px;height:21px;border-color:#a8a8a8;box-shadow:inset 0 0 0 1px #c4c4c4"></div>
<svg class="a" style="left:1085px;top:501px" width="12" height="8"><path d="M1 1.5L6 6.5L11 1.5" stroke="#5a5a5a" stroke-width="1.35" fill="none"/></svg>
<div class="a" style="left:68px;top:516px;width:472px;height:22px;background:#ffffcc"></div>
<div class="a" style="left:541px;top:516px;width:114px;height:22px;background:#ffffff"></div>
<div class="a" style="left:656px;top:516px;width:114px;height:22px;background:#ffffcc"></div>
<div class="a" style="left:771px;top:516px;width:372px;height:22px;background:#ffffff"></div>
<div class="a" style="left:1144px;top:516px;width:246px;height:22px;background:#ffffcc"></div>
<div class="a" style="left:67px;top:538px;width:1323px;height:1px;background:#d4d4d4"></div>
<div class="t n" style="left:70px;top:516px;font-size:14px;transform:scaleY(1.32);transform-origin:0 0">0000014</div>
<div class="t" style="left:139px;top:518px;font-size:16px;letter-spacing:1px">栃木　六男</div>
<div class="t n" style="left:412px;top:516px;font-size:14px;transform:scaleY(1.32);transform-origin:0 0">11<span class="c">:</span>27</div>
<div class="t n" style="left:546px;top:516px;font-size:14px;transform:scaleY(1.32);transform-origin:0 0">11<span class="c">:</span>27</div>
<div class="t n" style="left:603px;top:516px;font-size:14px;transform:scaleY(1.32);transform-origin:0 0">16<span class="c">:</span>00</div>
<div class="t n" style="left:661px;top:516px;font-size:14px;transform:scaleY(1.32);transform-origin:0 0">04<span class="c">:</span>33</div>
<div class="vb" style="left:1081px;top:516px;width:22px;height:22px;border-color:#a8a8a8;box-shadow:inset 0 0 0 1px #c4c4c4"></div>
<svg class="a" style="left:1085px;top:524px" width="12" height="8"><path d="M1 1.5L6 6.5L11 1.5" stroke="#5a5a5a" stroke-width="1.35" fill="none"/></svg>
<div class="a" style="left:68px;top:539px;width:472px;height:21px;background:#ffffcc"></div>
<div class="a" style="left:541px;top:539px;width:114px;height:21px;background:#ffffff"></div>
<div class="a" style="left:656px;top:539px;width:114px;height:21px;background:#ffffcc"></div>
<div class="a" style="left:771px;top:539px;width:372px;height:21px;background:#ffffff"></div>
<div class="a" style="left:1144px;top:539px;width:246px;height:21px;background:#ffffcc"></div>
<div class="a" style="left:67px;top:560px;width:1323px;height:1px;background:#d4d4d4"></div>
<div class="t n" style="left:70px;top:538px;font-size:14px;transform:scaleY(1.32);transform-origin:0 0">0000015</div>
<div class="t" style="left:139px;top:540px;font-size:16px;letter-spacing:1px">埼玉　恵子</div>
<div class="t n" style="left:412px;top:538px;font-size:14px;transform:scaleY(1.32);transform-origin:0 0">07<span class="c">:</span>08</div>
<div class="t n" style="left:469px;top:538px;font-size:14px;transform:scaleY(1.32);transform-origin:0 0">18<span class="c">:</span>10</div>
<div class="t n" style="left:546px;top:538px;font-size:14px;transform:scaleY(1.32);transform-origin:0 0">07<span class="c">:</span>08</div>
<div class="t n" style="left:603px;top:538px;font-size:14px;transform:scaleY(1.32);transform-origin:0 0">18<span class="c">:</span>10</div>
<div class="t n" style="left:661px;top:538px;font-size:14px;transform:scaleY(1.32);transform-origin:0 0">11<span class="c">:</span>02</div>
<div class="t n" style="left:718px;top:538px;font-size:14px;transform:scaleY(1.32);transform-origin:0 0">00<span class="c">:</span>09</div>
<div class="vb" style="left:1081px;top:539px;width:22px;height:21px;border-color:#a8a8a8;box-shadow:inset 0 0 0 1px #c4c4c4"></div>
<svg class="a" style="left:1085px;top:546px" width="12" height="8"><path d="M1 1.5L6 6.5L11 1.5" stroke="#5a5a5a" stroke-width="1.35" fill="none"/></svg>
<div class="a" style="left:68px;top:561px;width:472px;height:22px;background:#ffffcc"></div>
<div class="a" style="left:541px;top:561px;width:114px;height:22px;background:#ffffff"></div>
<div class="a" style="left:656px;top:561px;width:114px;height:22px;background:#ffffcc"></div>
<div class="a" style="left:771px;top:561px;width:372px;height:22px;background:#ffffff"></div>
<div class="a" style="left:1144px;top:561px;width:246px;height:22px;background:#ffffcc"></div>
<div class="a" style="left:67px;top:583px;width:1323px;height:1px;background:#d4d4d4"></div>
<div class="t n" style="left:70px;top:561px;font-size:14px;transform:scaleY(1.32);transform-origin:0 0">0000016</div>
<div class="t" style="left:139px;top:563px;font-size:16px;letter-spacing:1px">群馬　淳子</div>
<div class="t n" style="left:412px;top:561px;font-size:14px;transform:scaleY(1.32);transform-origin:0 0">09<span class="c">:</span>28</div>
<div class="t n" style="left:469px;top:561px;font-size:14px;transform:scaleY(1.32);transform-origin:0 0">16<span class="c">:</span>06</div>
<div class="t n" style="left:546px;top:561px;font-size:14px;transform:scaleY(1.32);transform-origin:0 0">09<span class="c">:</span>28</div>
<div class="t n" style="left:603px;top:561px;font-size:14px;transform:scaleY(1.32);transform-origin:0 0">16<span class="c">:</span>06</div>
<div class="t n" style="left:661px;top:561px;font-size:14px;transform:scaleY(1.32);transform-origin:0 0">06<span class="c">:</span>38</div>
<div class="vb" style="left:1081px;top:561px;width:22px;height:22px;border-color:#a8a8a8;box-shadow:inset 0 0 0 1px #c4c4c4"></div>
<svg class="a" style="left:1085px;top:569px" width="12" height="8"><path d="M1 1.5L6 6.5L11 1.5" stroke="#5a5a5a" stroke-width="1.35" fill="none"/></svg>
<div class="a" style="left:68px;top:584px;width:472px;height:21px;background:#ffffcc"></div>
<div class="a" style="left:541px;top:584px;width:114px;height:21px;background:#ffffff"></div>
<div class="a" style="left:656px;top:584px;width:114px;height:21px;background:#ffffcc"></div>
<div class="a" style="left:771px;top:584px;width:372px;height:21px;background:#ffffff"></div>
<div class="a" style="left:1144px;top:584px;width:246px;height:21px;background:#ffffcc"></div>
<div class="a" style="left:67px;top:605px;width:1323px;height:1px;background:#d4d4d4"></div>
<div class="t n" style="left:70px;top:583px;font-size:14px;transform:scaleY(1.32);transform-origin:0 0">0000017</div>
<div class="t" style="left:139px;top:585px;font-size:16px;letter-spacing:1px">千葉　鈴子</div>
<div class="t n" style="left:412px;top:583px;font-size:14px;transform:scaleY(1.32);transform-origin:0 0">10<span class="c">:</span>39</div>
<div class="t n" style="left:546px;top:583px;font-size:14px;transform:scaleY(1.32);transform-origin:0 0">10<span class="c">:</span>39</div>
<div class="t n" style="left:603px;top:583px;font-size:14px;transform:scaleY(1.32);transform-origin:0 0">16<span class="c">:</span>00</div>
<div class="t n" style="left:661px;top:583px;font-size:14px;transform:scaleY(1.32);transform-origin:0 0">05<span class="c">:</span>21</div>
<div class="vb" style="left:1081px;top:584px;width:22px;height:21px;border-color:#a8a8a8;box-shadow:inset 0 0 0 1px #c4c4c4"></div>
<svg class="a" style="left:1085px;top:591px" width="12" height="8"><path d="M1 1.5L6 6.5L11 1.5" stroke="#5a5a5a" stroke-width="1.35" fill="none"/></svg>
<div class="a" style="left:68px;top:606px;width:472px;height:22px;background:#ffffcc"></div>
<div class="a" style="left:541px;top:606px;width:114px;height:22px;background:#ffffff"></div>
<div class="a" style="left:656px;top:606px;width:114px;height:22px;background:#ffffcc"></div>
<div class="a" style="left:771px;top:606px;width:372px;height:22px;background:#ffffff"></div>
<div class="a" style="left:1144px;top:606px;width:246px;height:22px;background:#ffffcc"></div>
<div class="a" style="left:67px;top:628px;width:1323px;height:1px;background:#d4d4d4"></div>
<div class="t n" style="left:70px;top:606px;font-size:14px;transform:scaleY(1.32);transform-origin:0 0">0000018</div>
<div class="t" style="left:139px;top:608px;font-size:16px;letter-spacing:1px">東京　八郎</div>
<div class="t n" style="left:412px;top:606px;font-size:14px;transform:scaleY(1.32);transform-origin:0 0">08<span class="c">:</span>01</div>
<div class="t n" style="left:469px;top:606px;font-size:14px;transform:scaleY(1.32);transform-origin:0 0">15<span class="c">:</span>51</div>
<div class="t n" style="left:546px;top:606px;font-size:14px;transform:scaleY(1.32);transform-origin:0 0">08<span class="c">:</span>01</div>
<div class="t n" style="left:603px;top:606px;font-size:14px;transform:scaleY(1.32);transform-origin:0 0">15<span class="c">:</span>51</div>
<div class="t n" style="left:661px;top:606px;font-size:14px;transform:scaleY(1.32);transform-origin:0 0">07<span class="c">:</span>50</div>
<div class="vb" style="left:1081px;top:606px;width:22px;height:22px;border-color:#a8a8a8;box-shadow:inset 0 0 0 1px #c4c4c4"></div>
<svg class="a" style="left:1085px;top:614px" width="12" height="8"><path d="M1 1.5L6 6.5L11 1.5" stroke="#5a5a5a" stroke-width="1.35" fill="none"/></svg>
<div class="a" style="left:68px;top:629px;width:472px;height:21px;background:#ffffcc"></div>
<div class="a" style="left:541px;top:629px;width:114px;height:21px;background:#ffffff"></div>
<div class="a" style="left:656px;top:629px;width:114px;height:21px;background:#ffffcc"></div>
<div class="a" style="left:771px;top:629px;width:372px;height:21px;background:#ffffff"></div>
<div class="a" style="left:1144px;top:629px;width:246px;height:21px;background:#ffffcc"></div>
<div class="a" style="left:67px;top:650px;width:1323px;height:1px;background:#d4d4d4"></div>
<div class="t n" style="left:70px;top:628px;font-size:14px;transform:scaleY(1.32);transform-origin:0 0">0000019</div>
<div class="t" style="left:139px;top:630px;font-size:16px;letter-spacing:1px">神奈川　ちよ</div>
<div class="t n" style="left:412px;top:628px;font-size:14px;transform:scaleY(1.32);transform-origin:0 0">09<span class="c">:</span>12</div>
<div class="t n" style="left:469px;top:628px;font-size:14px;transform:scaleY(1.32);transform-origin:0 0">17<span class="c">:</span>57</div>
<div class="t n" style="left:546px;top:628px;font-size:14px;transform:scaleY(1.32);transform-origin:0 0">09<span class="c">:</span>12</div>
<div class="t n" style="left:603px;top:628px;font-size:14px;transform:scaleY(1.32);transform-origin:0 0">17<span class="c">:</span>57</div>
<div class="t n" style="left:661px;top:628px;font-size:14px;transform:scaleY(1.32);transform-origin:0 0">08<span class="c">:</span>45</div>
<div class="vb" style="left:1081px;top:629px;width:22px;height:21px;border-color:#a8a8a8;box-shadow:inset 0 0 0 1px #c4c4c4"></div>
<svg class="a" style="left:1085px;top:636px" width="12" height="8"><path d="M1 1.5L6 6.5L11 1.5" stroke="#5a5a5a" stroke-width="1.35" fill="none"/></svg>
<div class="a" style="left:68px;top:651px;width:472px;height:22px;background:#ffffcc"></div>
<div class="a" style="left:541px;top:651px;width:114px;height:22px;background:#ffffff"></div>
<div class="a" style="left:656px;top:651px;width:114px;height:22px;background:#ffffcc"></div>
<div class="a" style="left:771px;top:651px;width:372px;height:22px;background:#ffffff"></div>
<div class="a" style="left:1144px;top:651px;width:246px;height:22px;background:#ffffcc"></div>
<div class="a" style="left:67px;top:673px;width:1323px;height:1px;background:#d4d4d4"></div>
<div class="t n" style="left:70px;top:651px;font-size:14px;transform:scaleY(1.32);transform-origin:0 0">0000020</div>
<div class="t" style="left:139px;top:653px;font-size:16px;letter-spacing:1px">山梨　九朗</div>
<div class="t n" style="left:412px;top:651px;font-size:14px;transform:scaleY(1.32);transform-origin:0 0">07<span class="c">:</span>06</div>
<div class="t n" style="left:469px;top:651px;font-size:14px;transform:scaleY(1.32);transform-origin:0 0">17<span class="c">:</span>13</div>
<div class="t n" style="left:546px;top:651px;font-size:14px;transform:scaleY(1.32);transform-origin:0 0">07<span class="c">:</span>06</div>
<div class="t n" style="left:603px;top:651px;font-size:14px;transform:scaleY(1.32);transform-origin:0 0">17<span class="c">:</span>13</div>
<div class="t n" style="left:661px;top:651px;font-size:14px;transform:scaleY(1.32);transform-origin:0 0">10<span class="c">:</span>07</div>
<div class="vb" style="left:1081px;top:651px;width:22px;height:22px;border-color:#a8a8a8;box-shadow:inset 0 0 0 1px #c4c4c4"></div>
<svg class="a" style="left:1085px;top:659px" width="12" height="8"><path d="M1 1.5L6 6.5L11 1.5" stroke="#5a5a5a" stroke-width="1.35" fill="none"/></svg>
<div class="a" style="left:68px;top:674px;width:472px;height:21px;background:#ffffcc"></div>
<div class="a" style="left:541px;top:674px;width:114px;height:21px;background:#ffffff"></div>
<div class="a" style="left:656px;top:674px;width:114px;height:21px;background:#ffffcc"></div>
<div class="a" style="left:771px;top:674px;width:372px;height:21px;background:#ffffff"></div>
<div class="a" style="left:1144px;top:674px;width:246px;height:21px;background:#ffffcc"></div>
<div class="a" style="left:67px;top:695px;width:1323px;height:1px;background:#d4d4d4"></div>
<div class="t n" style="left:70px;top:673px;font-size:14px;transform:scaleY(1.32);transform-origin:0 0">0000021</div>
<div class="t" style="left:139px;top:675px;font-size:16px;letter-spacing:1px">長野　玉子</div>
<div class="t n" style="left:412px;top:673px;font-size:14px;transform:scaleY(1.32);transform-origin:0 0">11<span class="c">:</span>18</div>
<div class="t n" style="left:469px;top:673px;font-size:14px;transform:scaleY(1.32);transform-origin:0 0">18<span class="c">:</span>10</div>
<div class="t n" style="left:546px;top:673px;font-size:14px;transform:scaleY(1.32);transform-origin:0 0">11<span class="c">:</span>18</div>
<div class="t n" style="left:603px;top:673px;font-size:14px;transform:scaleY(1.32);transform-origin:0 0">18<span class="c">:</span>10</div>
<div class="t n" style="left:661px;top:673px;font-size:14px;transform:scaleY(1.32);transform-origin:0 0">06<span class="c">:</span>52</div>
<div class="t n" style="left:718px;top:673px;font-size:14px;transform:scaleY(1.32);transform-origin:0 0">00<span class="c">:</span>09</div>
<div class="vb" style="left:1081px;top:674px;width:22px;height:21px;border-color:#a8a8a8;box-shadow:inset 0 0 0 1px #c4c4c4"></div>
<svg class="a" style="left:1085px;top:681px" width="12" height="8"><path d="M1 1.5L6 6.5L11 1.5" stroke="#5a5a5a" stroke-width="1.35" fill="none"/></svg>
<div class="a" style="left:68px;top:696px;width:472px;height:22px;background:#ffffcc"></div>
<div class="a" style="left:541px;top:696px;width:114px;height:22px;background:#ffffff"></div>
<div class="a" style="left:656px;top:696px;width:114px;height:22px;background:#ffffcc"></div>
<div class="a" style="left:771px;top:696px;width:372px;height:22px;background:#ffffff"></div>
<div class="a" style="left:1144px;top:696px;width:246px;height:22px;background:#ffffcc"></div>
<div class="a" style="left:67px;top:718px;width:1323px;height:1px;background:#d4d4d4"></div>
<div class="t n" style="left:70px;top:696px;font-size:14px;transform:scaleY(1.32);transform-origin:0 0">0000022</div>
<div class="t" style="left:139px;top:698px;font-size:16px;letter-spacing:1px">新潟　勝男</div>
<div class="t n" style="left:412px;top:696px;font-size:14px;transform:scaleY(1.32);transform-origin:0 0">09<span class="c">:</span>59</div>
<div class="t n" style="left:469px;top:696px;font-size:14px;transform:scaleY(1.32);transform-origin:0 0">13<span class="c">:</span>34</div>
<div class="t n" style="left:546px;top:696px;font-size:14px;transform:scaleY(1.32);transform-origin:0 0">09<span class="c">:</span>59</div>
<div class="t n" style="left:603px;top:696px;font-size:14px;transform:scaleY(1.32);transform-origin:0 0">13<span class="c">:</span>34</div>
<div class="t n" style="left:661px;top:696px;font-size:14px;transform:scaleY(1.32);transform-origin:0 0">03<span class="c">:</span>35</div>
<div class="vb" style="left:1081px;top:696px;width:22px;height:22px;border-color:#a8a8a8;box-shadow:inset 0 0 0 1px #c4c4c4"></div>
<svg class="a" style="left:1085px;top:704px" width="12" height="8"><path d="M1 1.5L6 6.5L11 1.5" stroke="#5a5a5a" stroke-width="1.35" fill="none"/></svg>
<div class="a" style="left:68px;top:719px;width:472px;height:21px;background:#ffffcc"></div>
<div class="a" style="left:541px;top:719px;width:114px;height:21px;background:#ffffff"></div>
<div class="a" style="left:656px;top:719px;width:114px;height:21px;background:#ffffcc"></div>
<div class="a" style="left:771px;top:719px;width:372px;height:21px;background:#ffffff"></div>
<div class="a" style="left:1144px;top:719px;width:246px;height:21px;background:#ffffcc"></div>
<div class="a" style="left:67px;top:740px;width:1323px;height:1px;background:#d4d4d4"></div>
<div class="t n" style="left:70px;top:718px;font-size:14px;transform:scaleY(1.32);transform-origin:0 0">0000023</div>
<div class="t" style="left:139px;top:720px;font-size:16px;letter-spacing:1px">秋田　次郎</div>
<div class="t n" style="left:412px;top:718px;font-size:14px;transform:scaleY(1.32);transform-origin:0 0">10<span class="c">:</span>57</div>
<div class="t n" style="left:546px;top:718px;font-size:14px;transform:scaleY(1.32);transform-origin:0 0">10<span class="c">:</span>57</div>
<div class="t n" style="left:603px;top:718px;font-size:14px;transform:scaleY(1.32);transform-origin:0 0">16<span class="c">:</span>00</div>
<div class="t n" style="left:661px;top:718px;font-size:14px;transform:scaleY(1.32);transform-origin:0 0">05<span class="c">:</span>03</div>
<div class="vb" style="left:1081px;top:719px;width:22px;height:21px;border-color:#a8a8a8;box-shadow:inset 0 0 0 1px #c4c4c4"></div>
<svg class="a" style="left:1085px;top:726px" width="12" height="8"><path d="M1 1.5L6 6.5L11 1.5" stroke="#5a5a5a" stroke-width="1.35" fill="none"/></svg>
<div class="a" style="left:68px;top:741px;width:472px;height:22px;background:#ffffcc"></div>
<div class="a" style="left:541px;top:741px;width:114px;height:22px;background:#ffffff"></div>
<div class="a" style="left:656px;top:741px;width:114px;height:22px;background:#ffffcc"></div>
<div class="a" style="left:771px;top:741px;width:372px;height:22px;background:#ffffff"></div>
<div class="a" style="left:1144px;top:741px;width:246px;height:22px;background:#ffffcc"></div>
<div class="a" style="left:67px;top:763px;width:1323px;height:1px;background:#d4d4d4"></div>
<div class="t n" style="left:70px;top:741px;font-size:14px;transform:scaleY(1.32);transform-origin:0 0">0000024</div>
<div class="t" style="left:139px;top:743px;font-size:16px;letter-spacing:1px">滋賀　千賀子</div>
<div class="t n" style="left:412px;top:741px;font-size:14px;transform:scaleY(1.32);transform-origin:0 0">07<span class="c">:</span>37</div>
<div class="t n" style="left:469px;top:741px;font-size:14px;transform:scaleY(1.32);transform-origin:0 0">17<span class="c">:</span>53</div>
<div class="t n" style="left:546px;top:741px;font-size:14px;transform:scaleY(1.32);transform-origin:0 0">07<span class="c">:</span>37</div>
<div class="t n" style="left:603px;top:741px;font-size:14px;transform:scaleY(1.32);transform-origin:0 0">17<span class="c">:</span>53</div>
<div class="t n" style="left:661px;top:741px;font-size:14px;transform:scaleY(1.32);transform-origin:0 0">10<span class="c">:</span>16</div>
<div class="vb" style="left:1081px;top:741px;width:22px;height:22px;border-color:#a8a8a8;box-shadow:inset 0 0 0 1px #c4c4c4"></div>
<svg class="a" style="left:1085px;top:749px" width="12" height="8"><path d="M1 1.5L6 6.5L11 1.5" stroke="#5a5a5a" stroke-width="1.35" fill="none"/></svg>
<div class="a" style="left:68px;top:764px;width:472px;height:21px;background:#ffffcc"></div>
<div class="a" style="left:541px;top:764px;width:114px;height:21px;background:#ffffff"></div>
<div class="a" style="left:656px;top:764px;width:114px;height:21px;background:#ffffcc"></div>
<div class="a" style="left:771px;top:764px;width:372px;height:21px;background:#ffffff"></div>
<div class="a" style="left:1144px;top:764px;width:246px;height:21px;background:#ffffcc"></div>
<div class="a" style="left:67px;top:785px;width:1323px;height:1px;background:#d4d4d4"></div>
<div class="t n" style="left:70px;top:763px;font-size:14px;transform:scaleY(1.32);transform-origin:0 0">0000025</div>
<div class="t" style="left:139px;top:765px;font-size:16px;letter-spacing:1px">京都　一郎</div>
<div class="t n" style="left:412px;top:763px;font-size:14px;transform:scaleY(1.32);transform-origin:0 0">09<span class="c">:</span>12</div>
<div class="t n" style="left:546px;top:763px;font-size:14px;transform:scaleY(1.32);transform-origin:0 0">09<span class="c">:</span>12</div>
<div class="t n" style="left:603px;top:763px;font-size:14px;transform:scaleY(1.32);transform-origin:0 0">16<span class="c">:</span>00</div>
<div class="t n" style="left:661px;top:763px;font-size:14px;transform:scaleY(1.32);transform-origin:0 0">06<span class="c">:</span>48</div>
<div class="vb" style="left:1081px;top:764px;width:22px;height:21px;border-color:#a8a8a8;box-shadow:inset 0 0 0 1px #c4c4c4"></div>
<svg class="a" style="left:1085px;top:771px" width="12" height="8"><path d="M1 1.5L6 6.5L11 1.5" stroke="#5a5a5a" stroke-width="1.35" fill="none"/></svg>
<div class="a" style="left:68px;top:786px;width:472px;height:22px;background:#ffffcc"></div>
<div class="a" style="left:541px;top:786px;width:114px;height:22px;background:#ffffff"></div>
<div class="a" style="left:656px;top:786px;width:114px;height:22px;background:#ffffcc"></div>
<div class="a" style="left:771px;top:786px;width:372px;height:22px;background:#ffffff"></div>
<div class="a" style="left:1144px;top:786px;width:246px;height:22px;background:#ffffcc"></div>
<div class="t n" style="left:70px;top:786px;font-size:14px;transform:scaleY(1.32);transform-origin:0 0">0000026</div>
<div class="t" style="left:139px;top:788px;font-size:16px;letter-spacing:1px">兵庫　花江</div>
<div class="t n" style="left:412px;top:786px;font-size:14px;transform:scaleY(1.32);transform-origin:0 0">08<span class="c">:</span>57</div>
<div class="t n" style="left:469px;top:786px;font-size:14px;transform:scaleY(1.32);transform-origin:0 0">17<span class="c">:</span>52</div>
<div class="t n" style="left:546px;top:786px;font-size:14px;transform:scaleY(1.32);transform-origin:0 0">08<span class="c">:</span>57</div>
<div class="t n" style="left:603px;top:786px;font-size:14px;transform:scaleY(1.32);transform-origin:0 0">17<span class="c">:</span>52</div>
<div class="t n" style="left:661px;top:786px;font-size:14px;transform:scaleY(1.32);transform-origin:0 0">08<span class="c">:</span>55</div>
<div class="vb" style="left:1081px;top:786px;width:22px;height:22px;border-color:#a8a8a8;box-shadow:inset 0 0 0 1px #c4c4c4"></div>
<svg class="a" style="left:1085px;top:794px" width="12" height="8"><path d="M1 1.5L6 6.5L11 1.5" stroke="#5a5a5a" stroke-width="1.35" fill="none"/></svg>
<div class="a" style="left:67px;top:224px;width:1px;height:572px;background:#d2d0da"></div>
<div class="a" style="left:406px;top:224px;width:1px;height:572px;background:#d2d0da"></div>
<div class="a" style="left:463px;top:224px;width:1px;height:572px;background:#d2d0da"></div>
<div class="a" style="left:521px;top:224px;width:1px;height:572px;background:#d2d0da"></div>
<div class="a" style="left:540px;top:224px;width:1px;height:572px;background:#d2d0da"></div>
<div class="a" style="left:598px;top:224px;width:1px;height:572px;background:#d2d0da"></div>
<div class="a" style="left:655px;top:224px;width:1px;height:572px;background:#d2d0da"></div>
<div class="a" style="left:713px;top:224px;width:1px;height:572px;background:#d2d0da"></div>
<div class="a" style="left:770px;top:224px;width:1px;height:572px;background:#d2d0da"></div>
<div class="a" style="left:1040px;top:224px;width:1px;height:572px;background:#d2d0da"></div>
<div class="a" style="left:1103px;top:224px;width:1px;height:572px;background:#d2d0da"></div>
<div class="a" style="left:1143px;top:224px;width:1px;height:572px;background:#d2d0da"></div>
<div class="a" style="left:1177px;top:224px;width:1px;height:572px;background:#d2d0da"></div>
<div class="a" style="left:6px;top:795px;width:1406px;height:1px;background:#f0f0f0"></div>
</body></html>
